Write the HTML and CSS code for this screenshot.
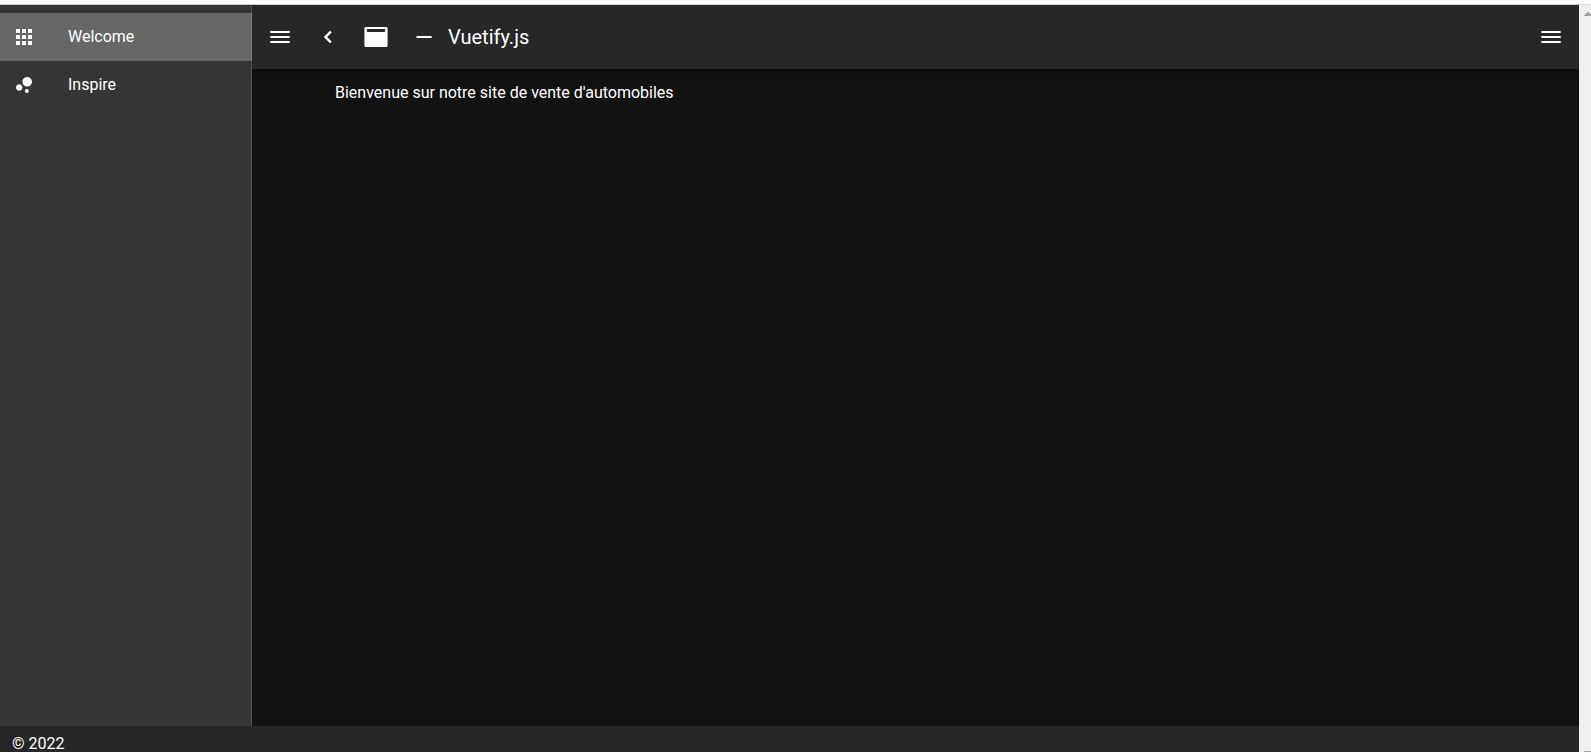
FILE: index.html
```html
<!DOCTYPE html>
<html lang="fr">
<head>
<meta charset="utf-8">
<title>Vuetify.js</title>
<link rel="stylesheet" href="styles.css">
</head>
<body>
<div class="window">
  <div class="app">
    <div class="layout">
      <nav class="drawer">
        <a class="item item-active" href="#welcome">
          <svg class="icon" viewBox="0 0 24 24" aria-hidden="true"><path d="M16,20H20V16H16M16,14H20V10H16M10,8H14V4H10M16,8H20V4H16M10,14H14V10H10M4,14H8V10H4M4,20H8V16H4M10,20H14V16H10M4,8H8V4H4V8Z"/></svg>
          <span>Welcome</span>
        </a>
        <a class="item" href="#inspire">
          <svg class="icon" viewBox="0 0 24 24" aria-hidden="true"><path d="M7.2,11.2C8.97,11.2 10.4,12.63 10.4,14.4C10.4,16.17 8.97,17.6 7.2,17.6C5.43,17.6 4,16.17 4,14.4C4,12.63 5.43,11.2 7.2,11.2M14.8,16A2,2 0 0,1 16.8,18A2,2 0 0,1 14.8,20A2,2 0 0,1 12.8,18A2,2 0 0,1 14.8,16M15.2,4A4.8,4.8 0 0,1 20,8.8C20,11.45 17.85,13.6 15.2,13.6A4.8,4.8 0 0,1 10.4,8.8C10.4,6.15 12.55,4 15.2,4Z"/></svg>
          <span>Inspire</span>
        </a>
      </nav>
      <div class="page">
        <header class="bar">
          <button class="icon-button" type="button" aria-label="Menu"><svg class="icon" viewBox="0 0 24 24"><path d="M2.3,6H21.7V8H2.3V6M2.3,11H21.7V13H2.3V11M2.3,16H21.7V18H2.3V16Z"/></svg></button>
          <button class="icon-button" type="button" aria-label="Réduire"><svg class="icon icon-bold" viewBox="0 0 24 24"><path d="M15.41,16.58L10.83,12L15.41,7.41L14,6L8,12L14,18L15.41,16.58Z"/></svg></button>
          <button class="icon-button" type="button" aria-label="Application"><svg class="icon" viewBox="0 0 24 24"><path d="M22.4,2H1.6C0.9,2 0.4,2.5 0.4,3.2V20.8C0.4,21.5 0.9,22 1.6,22H22.4C23.1,22 23.6,21.5 23.6,20.8V3.2C23.6,2.5 23.1,2 22.4,2M21,7H3V4H21V7Z"/></svg></button>
          <button class="icon-button" type="button" aria-label="Pied de page"><svg class="icon" viewBox="0 0 24 24"><path d="M4.5,11H19.7V13H4.5Z"/></svg></button>
          <h1 class="title">Vuetify.js</h1>
          <button class="icon-button" type="button" aria-label="Menu droit"><svg class="icon" viewBox="0 0 24 24"><path d="M2.3,6H21.7V8H2.3V6M2.3,11H21.7V13H2.3V11M2.3,16H21.7V18H2.3V16Z"/></svg></button>
        </header>
        <main class="content">Bienvenue sur notre site de vente d'automobiles</main>
      </div>
    </div>
    <footer class="footer">© 2022</footer>
  </div>
  <div class="scrollbar" aria-hidden="true">
    <svg class="arrow" viewBox="0 0 8 4" shape-rendering="crispEdges"><path d="M0,4V3H1V2H2V1H3V0H5V1H6V2H7V3H8V4Z"/></svg>
    <svg class="arrow" viewBox="0 0 8 4" shape-rendering="crispEdges"><path d="M0,0V1H1V2H2V3H3V4H5V3H6V2H7V1H8V0Z"/></svg>
  </div>
</div>
</body>
</html>
```
FILE: styles.css
```css
* {
  box-sizing: border-box;
}

html,
body {
  height: 100%;
  margin: 0;
  overflow: hidden;
}

body {
  background: #121212;
  color: #fff;
  font-family: Roboto, "Liberation Sans", sans-serif;
  font-size: 16px;
  line-height: 24px;
}

/* The window is slightly taller than the viewport: the footer runs past its edge. */
.window {
  display: flex;
  height: calc(100% + 10px);
  padding-top: 4px;
  background: #fff;
}

.app {
  display: flex;
  flex: 1;
  flex-direction: column;
  min-width: 0;
  border-top: 1px solid #cfcfcf;
  background: #121212;
}

.layout {
  display: flex;
  flex: 1;
  min-height: 0;
}

.drawer {
  width: 252px;
  flex-shrink: 0;
  padding: 8px 0;
  border-right: 1px solid #535353;
  background: #363636;
}

.item {
  display: flex;
  align-items: center;
  gap: 32px;
  min-height: 48px;
  padding: 0 12px;
  color: #fff;
  text-decoration: none;
}

/* Covers the drawer's edge line with a lighter one. */
.item-active {
  margin-right: -1px;
  border-right: 1px solid #7a7a7a;
  background: #676767;
}

.icon {
  display: block;
  width: 24px;
  height: 24px;
  flex-shrink: 0;
  fill: currentColor;
}

.icon-bold {
  stroke: currentColor;
  stroke-width: 0.5;
}

.page {
  flex: 1;
  min-width: 0;
}

.bar {
  display: flex;
  align-items: center;
  height: 64px;
  padding: 0 4px;
  background: #272727;
  box-shadow: 0 2px 4px -1px rgba(0, 0, 0, 0.2), 0 4px 5px rgba(0, 0, 0, 0.14), 0 1px 10px rgba(0, 0, 0, 0.12);
  clip-path: inset(0 0 -16px 0);
}

.icon-button {
  display: flex;
  align-items: center;
  justify-content: center;
  width: 48px;
  height: 48px;
  padding: 0;
  border: 0;
  border-radius: 50%;
  background: transparent;
  color: #fff;
}

.title {
  flex: 1;
  margin: 0;
  font-size: 20px;
  font-weight: 400;
  line-height: 24px;
}

.content {
  max-width: 1185px;
  margin: 0 auto;
  padding: 12px;
}

.footer {
  height: 36px;
  padding: 6px 12px;
  background: #272727;
}

.scrollbar {
  display: flex;
  flex-direction: column;
  justify-content: space-between;
  width: 12px;
  flex-shrink: 0;
  padding: 7px 0 7px 5px;
  border-top: 1px solid #dcdcdc;
  background: #f0f0f0;
  overflow: hidden;
}

.arrow {
  display: block;
  width: 8px;
  height: 4px;
  flex-shrink: 0;
  fill: #a3a3a3;
}
```
